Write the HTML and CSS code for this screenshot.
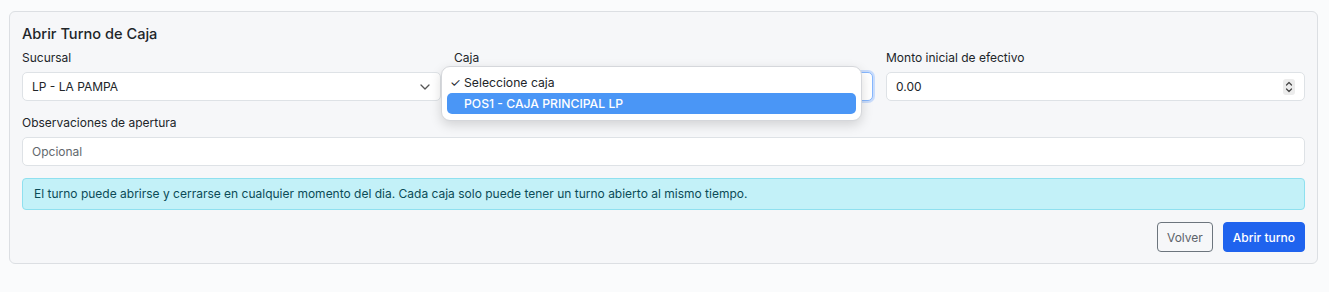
FILE: index.html
```html
<!DOCTYPE html>
<html lang="es">
<head>
    <meta charset="UTF-8">
    <meta name="viewport" content="width=device-width, initial-scale=1.0">
    <title>Abrir Turno de Caja</title>
    <link rel="stylesheet" href="styles.css">
</head>
<body>
    <div class="card">
        <h5 class="card-title">Abrir Turno de Caja</h5>
        <div class="row">
            <div class="field">
                <label>Sucursal</label>
                <div class="select">
                    <span>LP - LA PAMPA</span>
                    <svg class="chevron" width="10" height="6" viewBox="0 0 10 6"><path d="M1 1l4 4 4-4" fill="none" stroke="#555" stroke-width="1.3" stroke-linecap="round" stroke-linejoin="round"/></svg>
                </div>
            </div>
            <div class="field">
                <label>Caja</label>
                <div class="select focused">
                    <span class="hidden">Seleccione caja</span>
                    <svg class="chevron" width="10" height="6" viewBox="0 0 10 6"><path d="M1 1l4 4 4-4" fill="none" stroke="#555" stroke-width="1.3" stroke-linecap="round" stroke-linejoin="round"/></svg>
                </div>
                <div class="menu">
                    <div class="option"><span class="check">✓</span>Seleccione caja</div>
                    <div class="option active">POS1 - CAJA PRINCIPAL LP</div>
                </div>
            </div>
            <div class="field">
                <label>Monto inicial de efectivo</label>
                <div class="select">
                    <span>0.00</span>
                    <svg class="spin" width="12" height="16" viewBox="0 0 12 16"><rect width="12" height="16" rx="3" fill="#ececec"/><path d="M3.5 6l2.5-2.5 2.5 2.5M3.5 10l2.5 2.5 2.5-2.5" fill="none" stroke="#444" stroke-width="1.2" stroke-linecap="round" stroke-linejoin="round"/></svg>
                </div>
            </div>
        </div>
        <div class="field full">
            <label>Observaciones de apertura</label>
            <div class="select"><span class="placeholder">Opcional</span></div>
        </div>
        <div class="alert">El turno puede abrirse y cerrarse en cualquier momento del dia. Cada caja solo puede tener un turno abierto al mismo tiempo.</div>
        <div class="actions">
            <button class="btn btn-outline">Volver</button>
            <button class="btn btn-primary">Abrir turno</button>
        </div>
    </div>
</body>
</html>
```

FILE: styles.css
```css
body {
    margin: 0;
    padding: 11px 11px 0 9px;
    font-family: Inter, "Noto Sans", sans-serif;
    font-size: 12px;
    color: #212529;
    background-color: #fafbfc;
}
.card {
    background-color: #f6f7f9;
    border: 1px solid #dcdfe3;
    border-radius: 6px;
    padding: 11px 12px 11px 12px;
}
.card-title {
    margin: 1px 0 5px 0;
    font-size: 14.6px;
    font-weight: 500;
    line-height: 20px;
}
.row {
    display: grid;
    grid-template-columns: 1fr 1fr 1fr;
    gap: 13px;
}
.field {
    position: relative;
}
.field label {
    display: block;
    line-height: 18px;
    margin-bottom: 5px;
}
.full {
    margin-top: 13px;
}
.select {
    height: 27px;
    background: white;
    border: 1px solid #dee2e6;
    border-radius: 5px;
    display: flex;
    align-items: center;
    justify-content: space-between;
    padding: 0 9px 0 9px;
}
.select.focused {
    border-color: #86b7fe;
    box-shadow: 0 0 0 2px #c9dcfb;
}
.hidden {
    visibility: hidden;
}
.chevron {
    margin-right: 1px;
}
.placeholder {
    color: #62686e;
}
.menu {
    position: absolute;
    left: -13px;
    top: 17px;
    width: 409px;
    padding: 5px 5px 6px 5px;
    background: white;
    border: 1px solid #d5d7db;
    border-radius: 9px;
    box-shadow: 0 4px 12px rgba(0, 0, 0, 0.15);
}
.option {
    height: 21px;
    line-height: 21px;
    padding-left: 17px;
    border-radius: 5px;
    font-size: 12.2px;
}
.option .check {
    display: inline-block;
    width: 0;
    margin-left: -14px;
    margin-right: 14px;
}
.option.active {
    background-color: #4a96f6;
    color: white;
    font-weight: 500;
}
.alert {
    margin-top: 12px;
    padding: 0 11px;
    height: 30px;
    line-height: 30px;
    background-color: #c3f1f8;
    border: 1px solid #8fe0ef;
    border-radius: 4px;
    color: #0b4b57;
}
.actions {
    display: flex;
    justify-content: flex-end;
    gap: 10px;
    margin-top: 12px;
}
.btn {
    font-family: inherit;
    font-size: 12px;
    height: 30px;
    padding: 0 9px;
    border-radius: 4px;
    cursor: pointer;
}
.btn-outline {
    background: transparent;
    border: 1px solid #6c757d;
    color: #5c636a;
}
.btn-primary {
    background-color: #1f63ee;
    border: 1px solid #1f63ee;
    color: white;
    font-weight: 500;
}
```
